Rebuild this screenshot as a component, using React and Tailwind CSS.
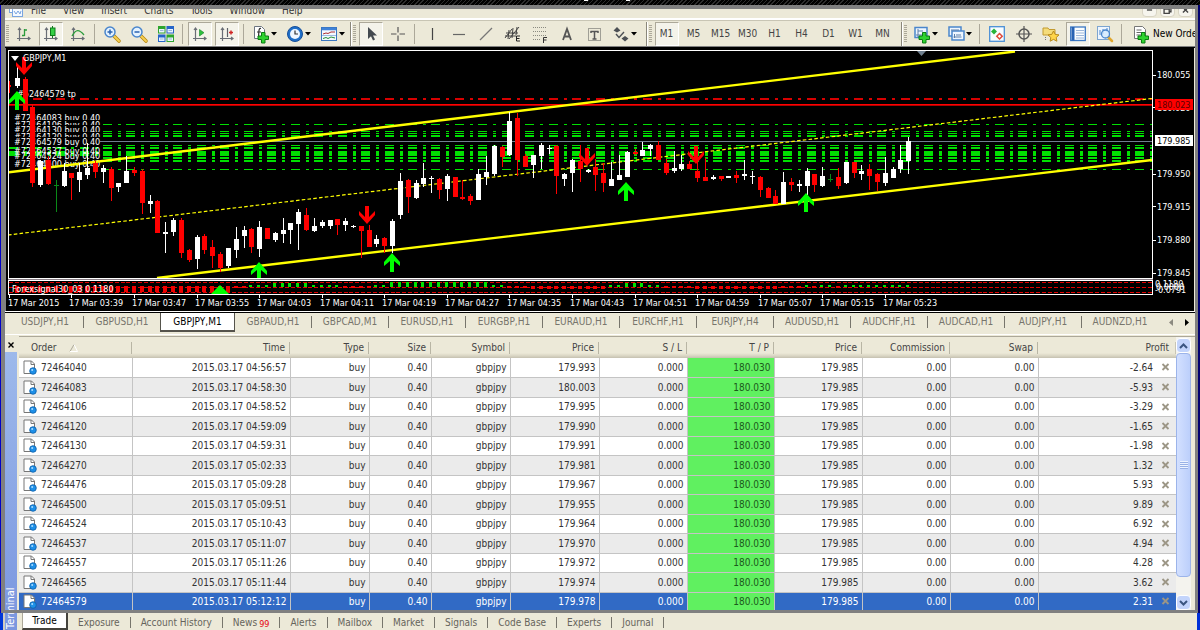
import React from "react";

const PITCH = 7.821;
const candleX = (i) => 16.7 + PITCH * i;
const tickY = (v) => 48 + v / 3;

/* [colour, high, low, body top, body bottom]; three units to the pixel, one bar a minute */
const CANDLES = [
  ["w", 55, 122, 90, 114], ["r", 88, 190, 93, 188], ["r", 172, 417, 178, 405], ["w", 335, 415, 338, 411],
  ["r", 325, 413, 335, 408], ["g", 395, 492, 412, 416], ["w", 345, 418, 370, 414], ["r", 375, 456, 376, 392],
  ["w", 345, 432, 372, 396], ["w", 285, 392, 360, 381], ["r", 340, 390, 346, 372], ["w", 352, 407, 360, 372],
  ["r", 357, 459, 363, 419], ["w", 404, 432, 405, 417], ["w", 325, 405, 369, 405], ["r", 358, 384, 366, 374],
  ["r", 364, 500, 369, 466], ["w", 441, 494, 460, 469], ["r", 457, 555, 460, 555], ["w", 521, 614, 551, 556],
  ["w", 510, 564, 516, 552], ["r", 510, 630, 516, 615], ["r", 603, 643, 606, 636], ["w", 561, 662, 566, 633],
  ["r", 557, 616, 563, 605], ["r", 577, 662, 597, 625], ["r", 612, 671, 618, 659], ["w", 600, 659, 601, 656],
  ["w", 537, 630, 574, 607], ["w", 534, 600, 546, 563], ["r", 540, 615, 543, 597], ["w", 520, 628, 537, 602],
  ["r", 540, 574, 541, 573], ["w", 552, 582, 556, 578], ["w", 510, 584, 546, 557], ["w", 524, 588, 526, 546],
  ["w", 484, 608, 492, 528], ["r", 481, 549, 502, 548], ["w", 510, 552, 535, 551], ["w", 516, 540, 522, 534],
  ["w", 515, 542, 517, 534], ["r", 513, 560, 514, 531], ["w", 510, 549, 518, 531], ["w", 530, 539, 533, 537],
  ["r", 534, 631, 535, 549], ["r", 532, 599, 546, 598], ["w", 561, 597, 574, 590], ["r", 568, 615, 570, 593],
  ["w", 513, 614, 519, 594], ["w", 375, 514, 399, 502], ["r", 393, 495, 396, 447], ["w", 395, 453, 405, 450],
  ["w", 345, 416, 390, 408], ["w", 383, 434, 389, 393], ["r", 390, 453, 393, 426], ["w", 378, 459, 384, 422],
  ["r", 387, 447, 388, 447], ["r", 396, 455, 446, 453], ["r", 438, 471, 443, 459], ["w", 363, 456, 378, 456],
  ["w", 325, 411, 372, 387], ["w", 290, 384, 293, 378], ["r", 294, 358, 296, 325], ["w", 192, 324, 219, 322],
  ["r", 195, 384, 210, 336], ["r", 318, 357, 324, 356], ["w", 320, 390, 321, 352], ["w", 285, 362, 290, 324],
  ["w", 292, 318, 299, 303], ["r", 292, 438, 294, 383], ["w", 374, 414, 378, 393], ["w", 334, 432, 336, 375],
  ["r", 292, 402, 340, 363], ["w", 363, 374, 366, 373], ["r", 333, 429, 357, 381], ["r", 345, 432, 375, 405],
  ["w", 342, 414, 393, 413], ["w", 322, 398, 381, 396], ["w", 309, 388, 311, 387], ["r", 304, 322, 311, 318],
  ["w", 282, 324, 305, 323], ["w", 289, 326, 291, 303], ["r", 279, 335, 290, 334], ["r", 333, 381, 345, 376],
  ["w", 309, 374, 360, 370], ["w", 322, 371, 348, 363], ["r", 340, 365, 348, 363], ["r", 340, 402, 369, 390],
  ["r", 330, 399, 387, 399], ["w", 381, 397, 388, 395], ["r", 384, 399, 385, 395], ["w", 385, 392, 385, 392],
  ["r", 370, 405, 381, 390], ["w", 337, 396, 378, 383], ["w", 369, 408, 384, 388], ["r", 385, 449, 387, 426],
  ["r", 418, 450, 419, 450], ["r", 426, 467, 444, 467], ["w", 372, 468, 402, 467], ["r", 390, 429, 402, 411],
  ["w", 396, 432, 408, 413], ["w", 360, 440, 369, 414], ["r", 377, 432, 378, 411], ["w", 357, 416, 384, 413],
  ["g", 378, 403, 392, 395], ["r", 360, 423, 387, 413], ["w", 342, 408, 343, 407], ["r", 342, 390, 343, 376],
  ["w", 351, 396, 369, 378], ["r", 348, 426, 363, 384], ["r", 375, 430, 378, 402], ["w", 327, 414, 375, 405],
  ["w", 357, 390, 363, 389], ["w", 291, 375, 336, 364], ["w", 267, 379, 279, 340],
];
const CANDLE_FILL = { w: "#ffffff", r: "#ff0000", g: "#0a8a18" };

/* [y, left end, thickness] */
const ORDER_LINES = [
  [124, 103, 1], [131, 103, 1], [133, 103, 1], [135, 103, 2], [145, 103, 1], [147, 8, 2], [151, 8, 2],
  [153, 8, 2], [155, 8, 1], [157, 103, 2], [160, 103, 2], [169, 103, 1],
];
const ORDER_LABELS = [
  ["#72464083 buy 0.40", 118], ["#72464106 buy 0.40", 125], ["#72464130 buy 0.40", 130],
  ["#72464120 buy 0.40", 137], ["#72464579 buy 0.40", 142], ["#72464537 buy 0.40", 151],
  ["#72464524 buy 0.40", 156], ["#72464500 buy 0.40", 164],
];
const PRICES = [["180.055", 75], ["179.950", 174], ["179.915", 207], ["179.880", 240], ["179.845", 273]];
const TIMES = ["03:39", "03:47", "03:55", "04:03", "04:11", "04:19", "04:27", "04:35", "04:43", "04:51", "04:59", "05:07", "05:15", "05:23"];
const DOWN_ARROWS = [[24, 75], [367, 224], [587, 166], [696, 164]];
const UP_ARROWS = [[17, 91], [259, 262], [392, 253], [626, 182], [806, 193]];

const signalGreen = (i) =>
  (i >= 30 && i <= 41) || (i >= 46 && i <= 62) || (i >= 76 && i <= 82) || i === 101 || i === 103 || i === 104 || i >= 106;
const signalHeight = (i) => {
  if (i < 28) return 6;
  if (i >= 33 && i <= 37) return 4;
  if (i >= 48 && i <= 60) return 5;
  if (i >= 78 && i <= 80) return 4;
  if (i >= 66 && i <= 75) return 3;
  if (i >= 87 && i <= 97) return 3;
  return 2;
};

/* Dash-dot line: a 9px dash and a 3px dot in every three bars */
const dashDot = (x0, y, h) => {
  let d = "";
  for (let k = -1; k < 49; k++) {
    const x = Math.round(32.6 + k * PITCH * 3);
    if (x >= x0 - 4) d += `M${x} ${y}h9v${h}h-9z`;
    if (x + 15 >= x0) d += `M${x + 15} ${y}h3v${h}h-3z`;
  }
  return d;
};

function Chart() {
  return (
    <svg viewBox="5 48 1190 263" className="block h-auto w-full bg-black" shapeRendering="crispEdges" role="img" aria-label="GBPJPY M1 chart">
      <clipPath id="plot"><rect x="9" y="51" width="1143" height="227" /></clipPath>
      <clipPath id="sub"><rect x="9" y="281" width="1143" height="13" /></clipPath>
      <rect x="5" y="48" width="1" height="263" fill="#808080" />
      <rect x="1194" y="48" width="1" height="263" fill="#ece9d8" />

      <g clipPath="url(#plot)">
        <g fill="#00e000">
          {ORDER_LINES.map(([y, x, h]) => <path key={y} d={dashDot(x, y, h)} />)}
        </g>
        <g fontSize="9" fill="#fff">
          {ORDER_LABELS.map(([t, y]) => (
            <g key={t}>
              {y < 145 && <rect x="13" y={y - 5} width="88" height="9" fill="#000" />}
              <text x="14" y={y + 3}>{t}</text>
            </g>
          ))}
          <text x="17" y="97">#52464579 tp</text>
        </g>
        <path d={dashDot(32, 98, 2)} fill="#d80000" />
        <path d="M9 104h1143v1H9z" fill="#ff0000" />
        <path d="M9 105h1143v1H9z" fill="#b00000" />
        <path d="M100 141h1052v1H100z" fill="#708090" />
        <g stroke="#ffff00" shapeRendering="auto">
          <path d="M8 172.3L1015 51.5M157 278L1152 160" strokeWidth="2.4" />
          <path d="M8 235L1152 98.5" strokeWidth="1.2" strokeDasharray="3.6 2.2" />
        </g>
        <path d="M9 81v12M7 86h4" stroke="#f00" strokeWidth="2" />
        {CANDLES.map(([c, hi, lo, t, b], i) => {
          const x = Math.round(candleX(i));
          return (
            <g key={i} fill={CANDLE_FILL[c]}>
              <rect x={x} y={Math.round(tickY(hi))} width="1" height={Math.round((lo - hi) / 3)} />
              <rect x={x - 2} y={Math.round(tickY(t))} width="5" height={Math.max(1, Math.round((b - t) / 3))} />
            </g>
          );
        })}
        <g shapeRendering="auto">
          {DOWN_ARROWS.map(([x, y]) => (
            <path key={x} transform={`translate(${x} ${y})`} fill="#ff0000" d="M0 0L8-9V-13L2-7V-18H-2V-7L-8-13V-9Z" />
          ))}
          {UP_ARROWS.map(([x, y]) => (
            <path key={x} transform={`translate(${x} ${y})`} fill="#00ff00" d="M0 0L8 9V13L2 8V19H-2V8L-8 13V9Z" />
          ))}
        </g>
      </g>
      <g shapeRendering="auto">
        <path d="M917 51H926L921.5 56Z" fill="#708090" />
        <path d="M11 56H19L15 61Z" fill="#fff" />
      </g>
      <text x="23" y="61" fontSize="9" fill="#fff">GBPJPY,M1</text>

      <g clipPath="url(#sub)">
        {[282, 287, 292].map((y) => (
          <path key={y} d={`M9 ${y + 0.5}H1152`} stroke="#e00000" strokeDasharray="4 1.87" />
        ))}
        {CANDLES.map((_, i) => {
          const g = signalGreen(i);
          const h = signalHeight(i);
          return <rect key={i} x={Math.round(candleX(i)) - 2} y={g ? 287 - h : 286} width={g ? 3 : 4} height={h} fill={g ? "#00e000" : "#f00000"} />;
        })}
        <path d="M220 285L229 294H211Z" fill="#00ff00" shapeRendering="auto" />
      </g>
      <text x="12" y="292" fontSize="9" fill="#fff">Forexsignal30_03 0.1180</text>

      <g fill="none" stroke="#fff">
        <path d="M8.5 294V280.5H1152.5V294.5H8" />
        <path d="M8.5 278.5V50.5H1152.5V278.5Z" />
        <path d="M8 279.5H1153" stroke="#8a8088" />
        <path d="M1153 75.5h3M1153 107.5h3M1153 174.5h3M1153 206.5h3M1153 240.5h3M1153 273.5h3" />
        <path d="M9.5 295v3" />
        {TIMES.map((t, k) => {
          const x = Math.round(candleX(7 + 8 * k)) + 0.5;
          return <path key={t} d={`M${x} 295v3`} />;
        })}
      </g>
      <g fontSize="9" fill="#fff">
        <text x="8" y="306">17 Mar 2015</text>
        {TIMES.map((t, k) => (
          <text key={t} x={Math.round(candleX(7 + 8 * k)) - 2} y="306">{`17 Mar ${t}`}</text>
        ))}
        {PRICES.map(([t, y]) => <text key={t} x="1157" y={y + 3}>{t}</text>)}
        <text x="1157" y="111">180.020</text>
        <text x="1155" y="287">0.1180</text>
        <text x="1156" y="290">0.0000</text>
        <text x="1155" y="293">-0.0791</text>
      </g>
      <rect x="1155" y="99" width="38" height="11" fill="#ff0000" />
      <rect x="1155" y="135" width="38" height="11" fill="#ffffff" />
      <g fontSize="9" fill="#000">
        <text x="1157" y="108" fill="#5a0000">180.023</text>
        <text x="1157" y="144">179.985</text>
      </g>
    </svg>
  );
}

const Svg = ({ children }) => (
  <svg width="16" height="16" viewBox="0 0 16 16" fill="none" className="shrink-0 overflow-visible" aria-hidden="true">{children}</svg>
);
const Axes = () => <path d="M3.5 2V15M1 12.5H14M2 4l1.500-2L5 4M12 11l2 1.500-2 1.500" stroke="#6a6e76" strokeWidth="1.200" />;
const Plus = () => <path d="M8.500 6.500h3.500v3.500h3.500v3.500h-3.500v3.500h-3.500v-3.500H5v-3.500h3.500z" fill="#2fd32f" stroke="#0b7d12" />;
const Magnifier = ({ minus }) => (
  <>
    <path d="M10 10l5 5" stroke="#b8860b" strokeWidth="3.600" strokeLinecap="round" />
    <path d="M10 10l5 5" stroke="#f5cf52" strokeWidth="2" strokeLinecap="round" />
    <circle cx="6" cy="6" r="5" fill="#e3f2ff" stroke="#4a86cc" strokeWidth="1.500" />
    <path d={minus ? "M3.500 6h5" : "M3.500 6h5M6 3.500v5"} stroke="#2a62b0" strokeWidth="1.500" />
  </>
);

const ICONS = {
  bars: <><Axes /><path d="M8.500 3v7M8.500 4h2.500M6 9.500h2.500" stroke="#2c9c3c" strokeWidth="1.300" /></>,
  candles: <><Axes /><path d="M9.500 0v12" stroke="#0f7a1c" /><rect x="7.500" y="2" width="4.500" height="7.500" fill="#35d045" stroke="#0f7a1c" /></>,
  line: <><Axes /><path d="M2 10C6 3 9 3 14 9" stroke="#2c9c3c" strokeWidth="1.300" /></>,
  zoomIn: <Magnifier />,
  zoomOut: <Magnifier minus />,
  tiles: (
    <>
      <rect x="0" y="0" width="7.500" height="7.500" fill="#2ea52e" /><rect x="8.500" y="0" width="7.500" height="7.500" fill="#2565c8" />
      <rect x="0" y="8.500" width="7.500" height="7.500" fill="#2565c8" /><rect x="8.500" y="8.500" width="7.500" height="7.500" fill="#2ea52e" />
      <path d="M1 3h5.500v3.500H1zM9.500 3H15v3.500H9.500zM1 11.500h5.500V15H1zM9.500 11.500H15V15H9.500z" fill="#eaf4ff" />
      <path d="M2 4.500h3.500M10.500 4.500H14M2 13h3.500M10.500 13H14" stroke="#9bb7d8" />
    </>
  ),
  scroll: <><Axes /><path d="M7.500 3.500v6.500L12 6.700z" fill="#2dc03d" stroke="#13822a" strokeWidth=".6" /></>,
  shift: <><Axes /><path d="M8.500 2v9" stroke="#5c6068" strokeWidth="1.200" /><path d="M14 6.500h-4M12 4.500v4" stroke="#d02525" strokeWidth="1.500" /></>,
  newIndicator: <><path d="M1.500.5h7l3 3v9h-10z" fill="#fff" stroke="#6c7580" /><path d="M8 2.500C5.500 2 6 5 5.500 11M4 6h4" stroke="#333" strokeWidth="1.200" /><Plus /></>,
  clock: <><circle cx="8" cy="8" r="7.500" fill="#1f6fc9" stroke="#174f9a" /><circle cx="8" cy="8" r="5" fill="#eff7ff" /><path d="M8 4.500V8h3" stroke="#333" strokeWidth="1.200" /></>,
  template: (
    <><rect x=".5" y="1.500" width="15" height="13" fill="#f2f8ff" stroke="#3a76c0" /><path d="M1 3h14" stroke="#3f82d8" strokeWidth="2.500" />
      <path d="M2 8l3-1 2 .500 3-1.500h4" stroke="#b03030" /><path d="M2 12.500l3-1 2 1 3-1.500 4 1" stroke="#259035" /><path d="M1 9.500h14" stroke="#9cbce0" /></>
  ),
  cursor: <path d="M5 1v12l3-2.800 2 4.300 2-1-2-4h4z" fill="#444a50" />,
  cross: <path d="M8 1v5.500M8 9.500V15M1 8h5.500M9.500 8H15" stroke="#555" strokeWidth="1.200" />,
  vline: <path d="M8.500 2v12" stroke="#444" strokeWidth="1.200" />,
  hline: <path d="M2 8.500h12" stroke="#666" strokeWidth="1.200" />,
  trend: <path d="M2 14L14 2" stroke="#777" strokeWidth="1.300" />,
  channel: <><path d="M0 12L7 3M4 13L14 1M1 7h12M0 10h11M4 4l-1 9M8 2L7 12M12 1l-1 8" stroke="#444" /><path d="M15 10h-3.500v5H15M11.500 12.500h3" stroke="#222" /></>,
  fibo: <><path d="M1 1.500h14M1 5.500h14M1 9.500h14M1 13.500h8" stroke="#8a8a80" strokeDasharray="1 1" /><path d="M15 11.500h-3.500V17M11.500 14h3" stroke="#333" /></>,
  text: <path d="M4 14L8 3L12 14M5.500 10.500h5" stroke="#555" strokeWidth="1.800" />,
  label: <><rect x="2.500" y="2.500" width="12" height="12" stroke="#555" strokeDasharray="1 1" /><path d="M4.500 5.500h8M8.500 5.500v8M6.500 13h4M5 5v2M12 5v2" stroke="#555" strokeWidth="1.500" /></>,
  shapes: <><path d="M4 1l3.500 3.500L4 6.500.5 4.500zM12 15.500L8.500 12.500 12 10l3.500 2.500z" fill="#4c5055" /><path d="M3 8l3 3.500L11 6" stroke="#4c5055" strokeWidth="1.400" /></>,
  newWindow: <><rect x="1" y="1.500" width="12" height="10" fill="#eef6ff" stroke="#4a86cc" strokeWidth="1.500" /><path d="M4 3v8M2 9h9M4 5h5" stroke="#5c7fa8" /><Plus /></>,
  windows: <><rect x="1" y="1" width="12" height="9" fill="#eef6ff" stroke="#4a86cc" strokeWidth="1.500" /><rect x="4" y="5" width="12" height="9" fill="#eef6ff" stroke="#4a86cc" strokeWidth="1.500" /><path d="M3 4h8M6.500 8v4M5.500 11h8M8 9h5" stroke="#5c7fa8" /></>,
  market: <><rect x=".7" y=".7" width="14.600" height="14.600" fill="#f8fcff" stroke="#4a8fd6" strokeWidth="1.300" /><path d="M5 2.500L8 5.500 5 8.500 2 5.500z" fill="#27b33a" /><path d="M10.500 7.500l2.700 2.700-2.700 2.800-2.700-2.800z" fill="#fff" stroke="#e04a3a" strokeWidth="1.500" /></>,
  target: <><circle cx="8" cy="8" r="5" stroke="#555" strokeWidth="1.500" /><path d="M8 0v16M0 8h16" stroke="#555" strokeWidth="1.200" /></>,
  navigator: <><path d="M0 2h5l1 1.500h6V9H0z" fill="#f5dc7a" stroke="#c29a30" /><path d="M10.500 5l1.700 3.400 3.800.500-2.800 2.600.700 3.700-3.400-1.800-3.400 1.800.700-3.700L5 8.900l3.800-.500z" fill="#ffd54a" stroke="#b88a1c" /><path d="M2.500 11v4" stroke="#777" strokeDasharray="1 1" /></>,
  terminal: <><rect x=".7" y="1" width="14.600" height="13.500" fill="#fafdff" stroke="#3c78c4" strokeWidth="1.300" /><path d="M3 1v13.500" stroke="#2863b4" strokeWidth="3" /><path d="M6 4.500h8M6 7h8M6 9.500h8M6 12h8" stroke="#9cb7da" /></>,
  tester: <><rect x=".5" y=".5" width="12" height="13" fill="#eef6ff" stroke="#7da5d0" /><path d="M3 9V4M6 8V3M10 6V2" stroke="#4a86cc" /><path d="M11 11l4 4" stroke="#e0a62c" strokeWidth="2.500" strokeLinecap="round" /><circle cx="8.500" cy="8" r="4" fill="#d4ebff" fillOpacity=".8" stroke="#4a86cc" strokeWidth="1.300" /></>,
  newOrder: <><path d="M1.500.5h8l3 3v9h-11z" fill="#fff" stroke="#777" /><path d="M3.500 4h5M3.500 6.500h6M3.500 9h5" stroke="#666" /><Plus /></>,
};

const Tool = ({ icon, on }) => (
  <button type="button" aria-label={icon} className="flex h-6 w-[27px] shrink-0 items-center justify-center">
    <span className={on ? "flex h-6 w-6 items-center justify-center border border-white border-t-[#aca899] border-l-[#aca899] bg-[#f4f3ea]" : "flex h-6 w-6 items-center justify-center"}>
      <Svg>{ICONS[icon]}</Svg>
    </span>
  </button>
);
const DropTool = ({ icon }) => (
  <button type="button" aria-label={icon} className="flex h-6 w-[34px] shrink-0 items-center gap-0.5 pl-1.5">
    <Svg>{ICONS[icon]}</Svg>
    <svg width="7" height="4" viewBox="0 0 7 4"><path d="M0 0h6L3 3.500z" fill="#000" /></svg>
  </button>
);
const Period = ({ name, on }) => (
  <button type="button" className="flex h-6 w-[27px] shrink-0 items-center justify-center text-[#444]">
    <span className={on ? "flex h-6 w-6 items-center justify-center border border-white border-t-[#aca899] border-l-[#aca899] bg-[#f4f3ea]" : ""}>{name}</span>
  </button>
);
const Sep = () => <span className="mx-[3px] h-5 w-px shrink-0 bg-[#aca899]" />;
const Grip = () => <span className="mx-px h-[18px] w-[3px] shrink-0 bg-[repeating-linear-gradient(#aca899_0_1px,#ece9d8_1px_2px)]" />;
const Edge = () => <span className="h-6 w-0.5 shrink-0 border-l border-[#8a877a] bg-white" />;

const PERIODS = ["M1", "M5", "M15", "M30", "H1", "H4", "D1", "W1", "MN"];

function Toolbar() {
  return (
    <div className="flex h-[25px] items-center overflow-hidden bg-[#ece9d8]">
      <div className="flex w-[345px] shrink-0 items-center">
        <Grip />
        <Tool icon="bars" /><Tool icon="candles" on /><Tool icon="line" />
        <Sep />
        <Tool icon="zoomIn" /><Tool icon="zoomOut" /><Tool icon="tiles" />
        <Sep />
        <Tool icon="scroll" on /><Tool icon="shift" on />
        <Sep />
        <DropTool icon="newIndicator" /><DropTool icon="clock" /><DropTool icon="template" />
      </div>
      <div className="flex w-[296px] shrink-0 items-center">
        <Edge /><Grip />
        <Tool icon="cursor" on /><Tool icon="cross" />
        <Sep />
        <Tool icon="vline" /><Tool icon="hline" /><Tool icon="trend" /><Tool icon="channel" /><Tool icon="fibo" /><Tool icon="text" /><Tool icon="label" />
        <DropTool icon="shapes" />
      </div>
      <div className="flex w-[255px] shrink-0 items-center">
        <Edge /><Grip />
        {PERIODS.map((p, i) => <Period key={p} name={p} on={i === 0} />)}
      </div>
      <div className="flex min-w-0 flex-1 items-center overflow-hidden">
        <Edge /><Grip />
        <DropTool icon="newWindow" /><DropTool icon="windows" />
        <Sep />
        <Tool icon="market" /><Tool icon="target" /><Tool icon="navigator" /><Tool icon="terminal" on /><Tool icon="tester" />
        <Sep />
        <button type="button" className="flex h-6 shrink-0 items-center gap-1 pl-2 whitespace-nowrap text-black">
          <Svg>{ICONS.newOrder}</Svg>New Order
        </button>
      </div>
    </div>
  );
}

const MENU = ["File", "View", "Insert", "Charts", "Tools", "Window", "Help"];

function MenuBar() {
  return (
    <div className="flex h-[9px] items-end overflow-hidden bg-[#ece9d8] pb-px pl-1 text-[#333]">
      <svg width="14" height="14" viewBox="0 0 14 14" className="mr-2 shrink-0">
        <rect x=".5" y=".5" width="9" height="9" fill="#fff" stroke="#7aa5e0" /><rect x="3.500" y="4.500" width="10" height="9" fill="#f4f9ff" stroke="#7aa5e0" />
        <path d="M5 8l2 3 2-3 2 3 1-3" stroke="#7aa5e0" fill="none" />
      </svg>
      <nav className="flex gap-[17px] leading-3">
        {MENU.map((m) => <button key={m} type="button">{m}</button>)}
      </nav>
      <div className="mr-0.5 ml-auto flex gap-[3px]">
        {["M4 7h6", "M3 6h6v5H3zM5 6V3h6v6H9", "M4 4l6 6M10 4l-6 6"].map((d, i) => (
          <button key={d} type="button" aria-label={["Minimize", "Restore", "Close"][i]} className="h-[14px] w-[15px] rounded-sm border border-[#d8d4c4] bg-[#f6f5ee]">
            <svg width="13" height="12" viewBox="0 0 14 14"><path d={d} fill="none" stroke="#444" strokeWidth="1.600" /></svg>
          </button>
        ))}
      </div>
    </div>
  );
}

const CHART_TABS = ["USDJPY,H1", "GBPUSD,H1", "GBPJPY,M1", "GBPAUD,H1", "GBPCAD,M1", "EURUSD,H1", "EURGBP,H1", "EURAUD,H1", "EURCHF,H1", "EURJPY,H4", "AUDUSD,H1", "AUDCHF,H1", "AUDCAD,H1", "AUDJPY,H1", "AUDNZD,H1"];

function ChartTabs() {
  return (
    <div className="flex h-[23px] items-start border-t border-white bg-[#ece9d8] text-[#77756c]">
      <div className="flex h-[20px] min-w-0 flex-1 items-start overflow-hidden border-t border-black pl-0.5">
        {CHART_TABS.map((t, i) => {
          const active = i === 2;
          return (
            <React.Fragment key={t}>
              <button type="button" className={active ? "h-[19px] w-[75px] shrink-0 border-r border-b-2 border-l border-[#55534c] bg-white text-black" : "h-[17px] w-[76px] shrink-0"}>{t}</button>
              {!active && i !== 1 && i < 14 && <span className="mt-[3px] h-3 w-px shrink-0 bg-[#77756c]" />}
            </React.Fragment>
          );
        })}
      </div>
      <div className="flex h-[20px] shrink-0 items-center gap-3 border-t border-black pr-1.5">
        <button type="button" aria-label="Scroll left"><svg width="4" height="7" viewBox="0 0 4 7"><path d="M4 0v7L0 3.500z" fill="#8c8a80" /></svg></button>
        <button type="button" aria-label="Scroll right"><svg width="4" height="7" viewBox="0 0 4 7"><path d="M0 0v7l4-3.500z" fill="#000" /></svg></button>
      </div>
    </div>
  );
}

const ORDERS = [
  ["72464040", "04:56:57", "179.993", "-2.64"], ["72464083", "04:58:30", "180.003", "-5.93"],
  ["72464106", "04:58:52", "179.995", "-3.29"], ["72464120", "04:59:09", "179.990", "-1.65"],
  ["72464130", "04:59:31", "179.991", "-1.98"], ["72464270", "05:02:33", "179.981", "1.32"],
  ["72464476", "05:09:28", "179.967", "5.93"], ["72464500", "05:09:51", "179.955", "9.89"],
  ["72464524", "05:10:43", "179.964", "6.92"], ["72464537", "05:11:07", "179.970", "4.94"],
  ["72464557", "05:11:26", "179.972", "4.28"], ["72464565", "05:11:44", "179.974", "3.62"],
  ["72464579", "05:12:12", "179.978", "2.31"],
];
const HEADS = ["Time", "Type", "Size", "Symbol", "Price", "S / L", "T / P", "Price", "Commission", "Swap"];

const DocIcon = () => (
  <svg width="14" height="15" viewBox="0 0 14 15" className="shrink-0">
    <path d="M1 1h7.500l3 3v9.500H1z" fill="#fff" stroke="#777" />
    <path d="M8 1v3.500h3.500" fill="none" stroke="#777" />
    <circle cx="10" cy="11" r="3.300" fill="#1e90e8" stroke="#0c5ea8" strokeWidth=".8" />
    <circle cx="9.200" cy="10" r="1" fill="#a8dcff" />
  </svg>
);

function Orders() {
  return (
    <table className="w-full table-fixed border-collapse text-right text-[#333]">
      <colgroup>
        <col className="w-[113px]" /><col className="w-[158px]" /><col className="w-[79px]" /><col className="w-[62px]" /><col className="w-[79px]" />
        <col className="w-[89px]" /><col className="w-[88px]" /><col className="w-[87px]" /><col className="w-[88px]" /><col className="w-[88px]" />
        <col className="w-[88px]" /><col />
      </colgroup>
      <thead>
        <tr className="h-[21px] bg-[linear-gradient(#ece9d8_0_16px,#d8d4c2_19px,#c4c0b0_21px)] text-[#444]">
          <th scope="col" className="p-0 pl-3 text-left font-normal">
            <span className="flex items-center gap-3 border-r border-[#b8b5a4] leading-3">Order
              <svg width="9" height="8" viewBox="0 0 9 8"><path d="M1 7.500L5 .5" stroke="#aca899" /><path d="M5 .5L8.500 7.500H1" stroke="#fff" fill="none" /></svg>
            </span>
          </th>
          {HEADS.map((h, i) => (
            <th scope="col" key={i} className="p-0 font-normal"><span className="block border-r border-[#b8b5a4] pr-1 leading-3">{h}</span></th>
          ))}
          <th scope="col" className="p-0 font-normal"><span className="block border-r border-[#c8c5b4] pr-1.5 leading-3">Profit</span></th>
        </tr>
      </thead>
      <tbody>
        {ORDERS.map(([id, time, price, profit], i) => {
          const sel = i === 12;
          const cells = [`2015.03.17 ${time}`, "buy", "0.40", "gbpjpy", price, "0.000", "180.030", "179.985", "0.00", "0.00"];
          return (
            <tr key={id} className={sel ? "h-[18px] bg-[#316ac5] text-white" : i % 2 ? "h-[20px] border-b border-[#c4c4c4] bg-[#ebebeb]" : "h-[19px] border-b border-[#c4c4c4] bg-white"}>
              <td className="border-r border-[#c4c4c4] p-0 pl-1"><span className="flex items-center gap-1 leading-[15px]"><DocIcon />{id}</span></td>
              {cells.map((c, k) => (
                <td key={k} className={k === 6 ? "border-r border-[#c4c4c4] bg-[#60f060] p-0 pr-[3px] leading-[15px] text-[#1c5a1c]" : "border-r border-[#c4c4c4] p-0 pr-[3px] leading-[15px]"}>{c}</td>
              ))}
              <td className="p-0 pr-1.5">
                <span className="flex items-center justify-end gap-2 leading-[15px]">{profit}
                  <button type="button" aria-label={`Close order ${id}`}><svg width="9" height="8" viewBox="0 0 9 8"><path d="M1.500 1l6 6M7.500 1l-6 6" stroke="#9c9686" strokeWidth="1.800" /></svg></button>
                </span>
              </td>
            </tr>
          );
        })}
      </tbody>
    </table>
  );
}

function Scrollbar() {
  const btn = "flex h-[15px] w-full shrink-0 items-center justify-center rounded-sm border border-white bg-[#c3d4fb]";
  return (
    <div className="mr-1 flex w-[15px] shrink-0 flex-col bg-[#f4f3ee] pt-px">
      <button type="button" aria-label="Scroll up" className={btn}><svg width="9" height="6" viewBox="0 0 9 6"><path d="M1 5l3.500-3.500L8 5" fill="none" stroke="#3b5580" strokeWidth="2" /></svg></button>
      <div className="mb-[18px] flex flex-1 items-center justify-center rounded-sm border border-[#9cb4ea] bg-[linear-gradient(90deg,#d3e0ff,#bccffb)]">
        <span className="h-2 w-2 bg-[repeating-linear-gradient(#eef4ff_0_1px,#9ab2e6_1px_2px)]" />
      </div>
      <button type="button" aria-label="Scroll down" className={btn}><svg width="9" height="6" viewBox="0 0 9 6"><path d="M1 1l3.500 3.500L8 1" fill="none" stroke="#3b5580" strokeWidth="2" /></svg></button>
    </div>
  );
}

const PANEL_TABS = ["Exposure", "Account History", "News", "Alerts", "Mailbox", "Market", "Signals", "Code Base", "Experts", "Journal"];

function Terminal() {
  return (
    <section className="relative flex bg-[#ece9d8]">
      <div className="flex w-3 shrink-0 flex-col">
        <button type="button" aria-label="Close panel" className="flex h-4 items-center justify-center pt-0.5"><svg width="6" height="6" viewBox="0 0 6 6"><path d="M.5.5l5 5M5.500.5l-5 5" stroke="#000" strokeWidth="1.400" /></svg></button>
        <div className="flex flex-1 rotate-180 items-center bg-[linear-gradient(#7a96df,#9db9eb)] pt-0.5 text-[11px] leading-3 text-white [writing-mode:vertical-rl]">Terminal</div>
      </div>
      <div className="ml-0.5 min-w-0 flex-1">
        <div className="flex border-t border-[#aca899]">
          <div className="min-w-0 flex-1"><Orders /></div>
          <Scrollbar />
        </div>
        <div className="mt-[3px] flex h-[18px] items-start overflow-hidden pl-[3px] text-[#66645c]">
          <button type="button" className="h-[17px] w-[46px] border-r-2 border-b-2 border-l border-[#44423c] border-l-[#aca899] bg-white text-black">Trade</button>
          {PANEL_TABS.map((t) => (
            <React.Fragment key={t}>
              <button type="button" className="flex h-[18px] items-center px-[10px]">
                {t}{t === "News" && <span className="pt-1 pl-0.5 text-[9px] leading-3 text-red-600">99</span>}
              </button>
              <span className="mt-1 h-[11px] w-px bg-[#77756c]" />
            </React.Fragment>
          ))}
        </div>
      </div>
      <div className="absolute inset-x-0 bottom-[18px] h-[3px] bg-[#808080]" />
    </section>
  );
}

export default function App() {
  return (
    <div className="min-h-screen overflow-hidden bg-[#ece9d8] font-['DejaVu_Sans_Condensed','Noto_Sans',sans-serif] text-[10px]">
      <div className="flex h-[5px] justify-center bg-[repeating-linear-gradient(135deg,#000_0_2px,#2c2c2c_2px_3px)]">
        <svg width="60" height="2" viewBox="0 0 60 2"><path d="M14 0h4v1h-4zM56 0h4v1h-4z" fill="#fff" /></svg>
      </div>
      <div className="flex">
        <div className="flex w-[5px] shrink-0 flex-col">
          <div className="flex-1 border-l border-[#0000c8] bg-[#808080]" />
          <div className="h-[18px] border-r-2 border-[#d0ccc0] bg-[#0038d8]" />
        </div>
        <div className="min-w-0 flex-1">
          <div className="h-1 bg-[#808080]" />
          <MenuBar />
          <div className="h-[3px] border-b border-[#c8c5b4] bg-white" />
          <Toolbar />
          <div className="h-0.5 border-t border-[#808080] bg-black" />
          <Chart />
          <ChartTabs />
          <div className="h-0.5 border-t border-white bg-[#ece9d8]" />
          <Terminal />
        </div>
        <div className="flex w-[5px] shrink-0 flex-col">
          <div className="flex-1 border-r-2 border-[#000070] bg-[#808080]" />
          <div className="h-[18px] border-r-[3px] border-[#0030d8] bg-[#ece9d8]" />
        </div>
      </div>
    </div>
  );
}
